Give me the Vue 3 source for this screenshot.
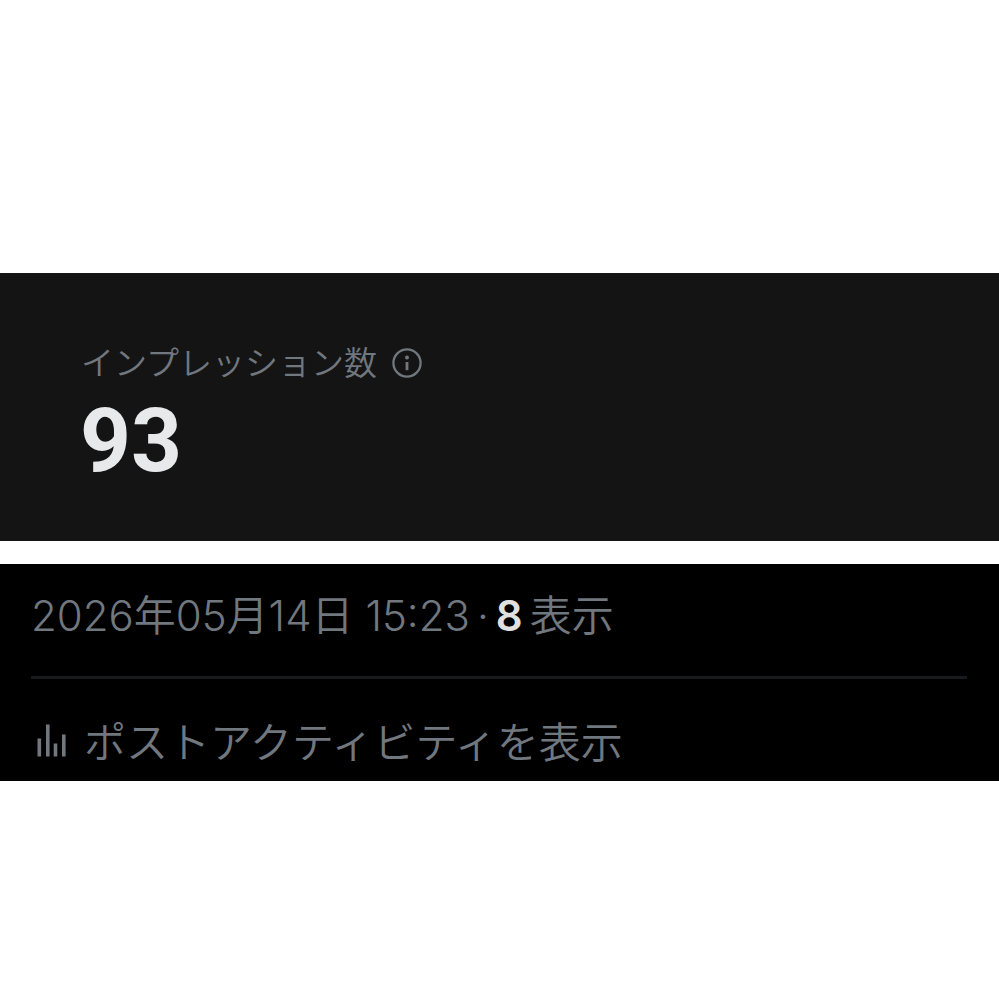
<template>
  <main class="page">
    <section class="impressions">
      <div class="impressions-label">
        <span>インプレッション数</span>
        <button type="button" class="info-btn" aria-label="インプレッション数">
          <svg viewBox="0 0 32 32" aria-hidden="true">
            <circle cx="16" cy="16" r="13.6" fill="none" stroke="currentColor" stroke-width="2.3" />
            <circle cx="16" cy="10.6" r="2" fill="currentColor" />
            <path d="M16 15v8.2" stroke="currentColor" stroke-width="2.8" />
          </svg>
        </button>
      </div>
      <strong class="impressions-value">{{ impressions }}</strong>
    </section>

    <section class="post">
      <p class="post-meta">
        <time datetime="2026-05-14T15:23">2026年05月14日 15:23</time>
        <span>·</span>
        <strong>{{ views }}</strong>
        <span>表示</span>
      </p>
      <a href="#" class="post-activity" @click.prevent>
        <svg class="chart-icon" viewBox="0 0 32 44" aria-hidden="true">
          <path
            d="M3.3 17.5v18M11.8 3.5v32M19.5 22.5v13M27.8 13.5v22"
            fill="none"
            stroke="currentColor"
            stroke-width="3.6"
          />
        </svg>
        <span>ポストアクティビティを表示</span>
      </a>
    </section>
  </main>
</template>

<script setup>
import { ref } from "vue";

const impressions = ref(93);
const views = ref(8);
</script>

<style>
body {
  margin: 0;
  background: #fff;
}
</style>

<style scoped>
.page {
  display: flex;
  flex-direction: column;
  gap: 23px;
  padding-top: 273px;
  font-family: Inter, "Noto Sans CJK JP", sans-serif;
  color: #71777e;
}

.impressions {
  display: flex;
  flex-direction: column;
  padding: 68px 80px 50px;
  background: #141414;
}

.impressions-label {
  display: flex;
  align-items: center;
  gap: 14px;
  padding-left: 1px;
  font-family: "Noto Sans CJK JP", sans-serif;
  font-size: 33px;
  font-weight: 350;
  line-height: 40px;
}

.info-btn {
  display: flex;
  width: 32px;
  height: 32px;
  margin-top: 4px;
  padding: 0;
  border: none;
  background: none;
  color: inherit;
  cursor: pointer;
}

.info-btn svg {
  width: 100%;
  height: 100%;
}

.impressions-value {
  margin-top: 10px;
  font-family: Roboto, sans-serif;
  font-size: 89px;
  font-weight: 700;
  line-height: 100px;
  color: #e7e9ea;
}

.post {
  padding: 0 32px 0 31px;
  background: #000;
  font-size: 42px;
  font-weight: 350;
}

.post-meta {
  display: flex;
  align-items: baseline;
  gap: 7px;
  margin: 0;
  padding: 22px 0 30px;
  border-bottom: 3px solid #181a1b;
  line-height: 60px;
}

.post-meta strong {
  font-weight: 600;
  color: #e0e0e0;
}

.post-activity {
  display: flex;
  align-items: center;
  gap: 16px;
  padding: 34px 0 8px 5px;
  line-height: 60px;
  color: inherit;
  text-decoration: none;
}

.chart-icon {
  width: 32px;
  height: 44px;
}
</style>
